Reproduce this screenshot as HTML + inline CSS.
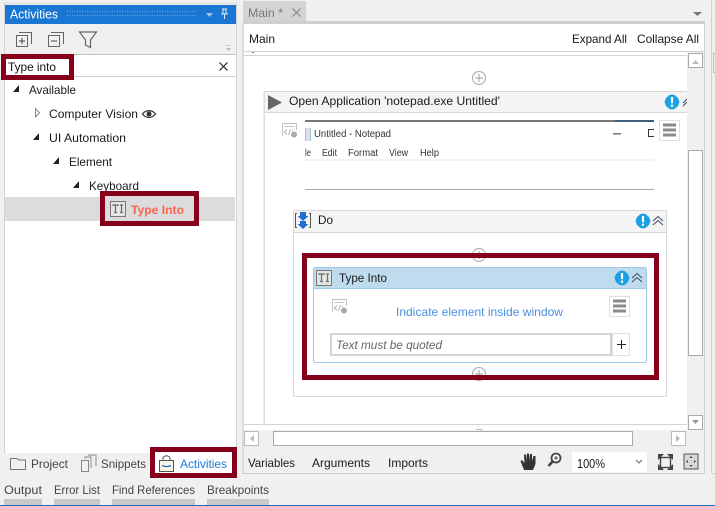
<!DOCTYPE html>
<html><head><meta charset="utf-8"><style>
html,body{margin:0;padding:0;background:#f0f0f0;width:715px;height:506px;overflow:hidden}
svg{display:block}
text{font-family:"Liberation Sans",sans-serif;font-size:12px;fill:#1a1a1a}
</style></head><body>
<svg width="715" height="506" viewBox="0 0 715 506" xmlns="http://www.w3.org/2000/svg">
<defs>
<g id="info"><path d="M0-7.500 L2.500-7 L6-4 L7.500 0 L6 4 L2.500 7 L0 7.500 L-2.500 7 L-6 4 L-7.500 0 L-6-4 L-2.500-7Z" fill="#1ba1e2"/><rect x="-1.100" y="-5" width="2.200" height="6.200" fill="#fff"/><rect x="-1.100" y="2.600" width="2.200" height="2.200" fill="#fff"/></g>
<path id="chev" d="M-5 0 L0-4.500 L5 0 M-5 4 L0-.5 L5 4" fill="none" stroke="#3c4a63" stroke-width="1"/>
<g id="plusc"><circle r="6.500" fill="#fff" stroke="#b4b4b4" stroke-width="1.200"/><path d="M-4 0H4M0-4V4" stroke="#a0a0a0" stroke-width="1"/></g>
<g id="menu"><rect x=".5" y=".5" width="20" height="20" fill="#fff" stroke="#dcdfe6"/><rect x="4" y="3.500" width="13" height="3" fill="#8a8a8a"/><rect x="4" y="8.500" width="13" height="3" fill="#8a8a8a"/><rect x="4" y="13.500" width="13" height="3" fill="#8a8a8a"/></g>
<g id="ti"><rect x=".5" y=".5" width="15" height="15" fill="#e4e4e4" stroke="#777"/><path d="M3 5V4H8V5M5.500 4V11.500M4 11.500H7M10 4H13M11.500 4V11.500M10 11.500H13" fill="none" stroke="#6c6c6c" stroke-width="1.200"/></g>
<g id="code"><path d="M.5 12.500V.5H14.500V7" fill="#fff" stroke="#c2c2c2"/><path d="M2.500 3.500H12.500" stroke="#c8c8c8"/><path d="M5 6.500 L2.500 9 L5 11.500M6.500 12 L8.500 6M10 7 L11 8" fill="none" stroke="#b0b0b0"/><circle cx="12" cy="11.500" r="3" fill="#aaa"/></g>
</defs>

<rect width="715" height="506" fill="#f0f0f0"/>

<!-- left panel -->
<path d="M4.500 2.500V453M236.500 2.500V453" fill="none" stroke="#d2d2d2"/>
<rect x="5" y="5" width="231" height="19" fill="#1976d2"/>
<rect x="5" y="2" width="231" height="3" fill="#e6e6e6"/>
<text x="10" y="18.500" textLength="48" lengthAdjust="spacingAndGlyphs" style="fill:#fff;font-size:13px">Activities</text>
<path d="M67 11.500H196M67 15.500H196" stroke="#6ea8e4" stroke-width="1" stroke-dasharray="1 1.500"/>
<path d="M206 13H213L209.500 17Z" fill="#9dc3ee"/>
<path d="M222 9H227M223 9V14M226 9V14M221 14H228M224.500 14V19" fill="none" stroke="#e4effb" stroke-width="1"/>

<rect x="16.500" y="35.500" width="11" height="11" fill="none" stroke="#666"/>
<path d="M19 32.500H31.500V44" fill="none" stroke="#666"/>
<path d="M19 41H25M22 38V44" stroke="#444"/>
<rect x="48.500" y="35.500" width="11" height="11" fill="none" stroke="#666"/>
<path d="M51 32.500H63.500V44" fill="none" stroke="#666"/>
<path d="M51 41H57" stroke="#444"/>
<path d="M79.500 32H96.500L90.500 40V47.500L85.500 45V40Z" fill="none" stroke="#666" stroke-width="1.200"/>
<path d="M226 45.500H231" stroke="#ccc"/><path d="M226 48H231L228.500 51Z" fill="#bbb"/>

<rect x="5" y="54" width="231" height="1" fill="#c4c4c4"/>
<rect x="5" y="55" width="231" height="398" fill="#fff"/>
<rect x="5" y="76" width="231" height="1" fill="#d0d0d0"/>
<rect x="3.500" y="56.500" width="68" height="21" fill="#fff" stroke="#87001b" stroke-width="5"/>
<text x="8" y="71" textLength="48" lengthAdjust="spacingAndGlyphs" style="fill:#111">Type into</text>
<path d="M219.500 62.500L227.500 70.500M227.500 62.500L219.500 70.500" stroke="#222" stroke-width="1.200"/>

<path d="M19 85V92H13Z" fill="#222"/>
<text x="29" y="94" textLength="47" lengthAdjust="spacingAndGlyphs">Available</text>
<path d="M35.500 108.500V117L39.500 112.750Z" fill="#fff" stroke="#888"/>
<text x="49" y="118" textLength="89" lengthAdjust="spacingAndGlyphs">Computer Vision</text>
<path d="M142.500 114C146 109.500 152 109.500 155.500 114C152 118.500 146 118.500 142.500 114Z" fill="none" stroke="#333" stroke-width="1.200"/><circle cx="149" cy="114" r="2.500" fill="#333"/>
<path d="M39 133V140H33Z" fill="#222"/>
<text x="49" y="142" textLength="77" lengthAdjust="spacingAndGlyphs">UI Automation</text>
<path d="M59 157V164H53Z" fill="#222"/>
<text x="69" y="166" textLength="43" lengthAdjust="spacingAndGlyphs">Element</text>
<path d="M79 181V188H73Z" fill="#222"/>
<text x="89" y="190" textLength="50" lengthAdjust="spacingAndGlyphs">Keyboard</text>

<rect x="5" y="197" width="230" height="24" fill="#dcdcdc"/>
<rect x="102.500" y="193.500" width="94" height="30" fill="#dcdcdc" stroke="#87001b" stroke-width="5"/>
<use href="#ti" x="110" y="201"/>
<text x="131" y="214" textLength="53" lengthAdjust="spacingAndGlyphs" style="font-weight:bold;fill:#f4674f">Type Into</text>

<!-- bottom tabs -->
<path d="M10.500 458.500H17L18.500 460H25.500V469.500H10.500Z" fill="none" stroke="#777"/>
<text x="31" y="468" textLength="37" lengthAdjust="spacingAndGlyphs" style="fill:#444">Project</text>
<path d="M81.500 460.500H88.500V471.500H81.500ZM85 459V457H91V468M89 456V455H96V466" fill="#f0f0f0" stroke="#888"/>
<text x="101" y="468" textLength="45" lengthAdjust="spacingAndGlyphs" style="fill:#444">Snippets</text>
<rect x="152.500" y="449.500" width="82" height="26" fill="#fff" stroke="#87001b" stroke-width="5"/>
<path d="M159.500 460.500H173.500V471.500H159.500Z" fill="#f8f4ea" stroke="#555"/>
<path d="M163 460V457.500Q166.500 454 170 457.500V460" fill="none" stroke="#555"/>
<path d="M162 465.500L165 466.500H168L171 465.500" fill="none" stroke="#2a6ab0" stroke-width="1.200"/>
<text x="180" y="468" textLength="47" lengthAdjust="spacingAndGlyphs" style="fill:#1f77e0">Activities</text>

<text x="4" y="494" textLength="38" lengthAdjust="spacingAndGlyphs" style="fill:#444">Output</text>
<text x="54" y="494" textLength="46" lengthAdjust="spacingAndGlyphs" style="fill:#444">Error List</text>
<text x="112" y="494" textLength="83" lengthAdjust="spacingAndGlyphs" style="fill:#444">Find References</text>
<text x="207" y="494" textLength="62" lengthAdjust="spacingAndGlyphs" style="fill:#444">Breakpoints</text>
<rect x="4" y="499" width="38" height="6" fill="#c9c9c9"/>
<rect x="54" y="499" width="46" height="6" fill="#c9c9c9"/>
<rect x="112" y="499" width="83" height="6" fill="#c9c9c9"/>
<rect x="207" y="499" width="62" height="6" fill="#c9c9c9"/>
<rect x="0" y="505" width="715" height="1" fill="#1b6ec2"/>

<!-- right edge -->
<rect x="711" y="0" width="1" height="473" fill="#d0d0d0"/>
<rect x="713.500" y="53.500" width="3" height="19" fill="none" stroke="#888" stroke-dasharray="1 1"/>
<rect x="712" y="473" width="3" height="1" fill="#d0d0d0"/>

<!-- main tab -->
<rect x="243" y="1" width="63" height="21" fill="#d3d3d3"/>
<text x="248" y="17" textLength="35" lengthAdjust="spacingAndGlyphs" style="fill:#777">Main *</text>
<path d="M292.500 8.500L300.500 16.500M300.500 8.500L292.500 16.500" stroke="#8a8a8a" stroke-width="1.200"/>
<path d="M693 12H702L697.500 16Z" fill="#777"/>
<rect x="243" y="21" width="462" height="3" fill="#cfcfcf"/>
<rect x="242" y="24" width="2" height="450" fill="#dcdcdc"/>
<rect x="704" y="21" width="1" height="453" fill="#cfcfcf"/>
<rect x="244" y="24" width="460" height="427" fill="#fff"/>
<text x="249" y="43" textLength="26" lengthAdjust="spacingAndGlyphs">Main</text>
<text x="572" y="43" textLength="55" lengthAdjust="spacingAndGlyphs">Expand All</text>
<text x="637" y="43" textLength="62" lengthAdjust="spacingAndGlyphs">Collapse All</text>
<rect x="244" y="51" width="460" height="1" fill="#d0d0d0"/>
<rect x="244" y="55" width="443" height="1" fill="#d4d4d4"/>
<rect x="252" y="52" width="2" height="1" fill="#4a90e2"/>

<!-- designer -->
<use href="#plusc" x="479" y="78"/>
<rect x="264" y="92" width="423" height="20" fill="#f4f4f4"/>
<path d="M264 91.500H687M264 112.500H687" stroke="#d8d8d8"/>
<path d="M264 424.500V91M264.500 424V91" stroke="#dedede"/>
<path d="M268 95L282 102.500L268 110Z" fill="#666"/>
<text x="289" y="105" textLength="211" lengthAdjust="spacingAndGlyphs">Open Application 'notepad.exe Untitled'</text>
<use href="#info" x="672" y="102"/>
<path d="M683 106L687 102M683 103L687 99" stroke="#3c4a63"/>
<use href="#code" x="282" y="123"/>

<!-- scrollbars -->
<rect x="687" y="52" width="17" height="379" fill="#f0f0f0"/>
<rect x="688.500" y="53.500" width="14" height="14" fill="#fff" stroke="#aaa"/>
<path d="M692 64H699L695.500 60Z" fill="#bbb"/>
<rect x="688.500" y="150.500" width="14" height="205" fill="#fff" stroke="#aaa"/>
<rect x="688.500" y="415.500" width="14" height="14" fill="#fff" stroke="#aaa"/>
<path d="M692 420H699L695.500 424Z" fill="#999"/>
<rect x="244" y="424" width="443" height="1" fill="#d4d4d4"/>
<rect x="244" y="430" width="460" height="21" fill="#f0f0f0"/>
<rect x="244.500" y="431.500" width="14" height="14" fill="#fff" stroke="#bbb"/>
<path d="M254 435V442L250 438.500Z" fill="#bbb"/>
<rect x="273.500" y="431.500" width="359" height="14" fill="#fff" stroke="#aaa"/>
<rect x="671.500" y="431.500" width="14" height="14" fill="#fff" stroke="#bbb"/>
<path d="M676 435V442L680 438.500Z" fill="#bbb"/>
<rect x="476" y="429" width="7" height="1" fill="#bbb"/>

<!-- bottom bar of designer -->
<rect x="242" y="473" width="463" height="1" fill="#cfcfcf"/>
<text x="248" y="467" textLength="47" lengthAdjust="spacingAndGlyphs">Variables</text>
<text x="312" y="467" textLength="58" lengthAdjust="spacingAndGlyphs">Arguments</text>
<text x="388" y="467" textLength="40" lengthAdjust="spacingAndGlyphs">Imports</text>
<path d="M524 470L520.500 461L522 460L524.500 463L524 454.500H526V461L527 453.500H529V461L530 454H532V461L533.500 456H535.500V464L533 470Z" fill="#333"/>
<circle cx="556" cy="458" r="4.500" fill="#fff" stroke="#444" stroke-width="1.800"/><path d="M553 461L548.500 466" stroke="#444" stroke-width="2.600"/><path d="M554 458H558M556 456V460" stroke="#444"/>
<rect x="572" y="452" width="75" height="20" fill="#fff"/>
<text x="577" y="468" textLength="28" lengthAdjust="spacingAndGlyphs" style="font-size:13px">100%</text>
<path d="M636 460L639 463L642 460" fill="none" stroke="#666"/>
<rect x="660.500" y="457.500" width="10" height="10" fill="none" stroke="#444" stroke-width="1.400"/>
<path d="M658 454H664L658 460ZM673 454H667L673 460ZM658 470H664L658 464ZM673 470H667L673 464Z" fill="#444"/>
<rect x="684" y="454" width="14" height="15" fill="#d8d8d8" stroke="#555"/>
<path d="M691 456L689.500 458H692.500ZM691 467L689.500 465H692.500ZM686 461.500L688 460V463ZM696 461.500L694 460V463Z" fill="#444"/>

<!-- notepad screenshot -->
<rect x="305" y="120" width="349" height="2" fill="#777"/>
<rect x="615" y="120" width="39" height="2" fill="#3d5f80"/>
<rect x="305" y="128" width="6" height="13" fill="#9cc"/><rect x="306" y="128" width="4" height="13" fill="#dde"/>
<text x="314" y="137" textLength="77" lengthAdjust="spacingAndGlyphs" style="font-size:10px;fill:#333">Untitled - Notepad</text>
<rect x="613" y="133" width="8" height="1.500" fill="#777"/>
<path d="M654 129.500H648.500V136.500H654" fill="none" stroke="#333"/>
<text x="305" y="156" textLength="6" lengthAdjust="spacingAndGlyphs" style="font-size:10px;fill:#333">le</text>
<text x="322" y="156" textLength="15" lengthAdjust="spacingAndGlyphs" style="font-size:10px;fill:#333">Edit</text>
<text x="348" y="156" textLength="30" lengthAdjust="spacingAndGlyphs" style="font-size:10px;fill:#333">Format</text>
<text x="389" y="156" textLength="19" lengthAdjust="spacingAndGlyphs" style="font-size:10px;fill:#333">View</text>
<text x="420" y="156" textLength="19" lengthAdjust="spacingAndGlyphs" style="font-size:10px;fill:#333">Help</text>
<rect x="305" y="159" width="349" height="2" fill="#f2f2f2"/>
<rect x="305" y="189" width="349" height="1" fill="#aaa"/>
<use href="#menu" x="659" y="120"/>

<!-- do -->
<rect x="293.500" y="210.500" width="373" height="186" fill="#fff" stroke="#d8d8d8"/>
<rect x="294" y="211" width="372" height="21" fill="#f4f4f4"/>
<path d="M293 232.500H667" stroke="#d4d4d4"/>
<path d="M297 213.500H295.500V227.500H297M309 213.500H310.500V227.500H309" fill="none" stroke="#555"/>
<path d="M300 212H306V216H308.500L303 221L297.500 216H300ZM300 221H306V224H308.500L303 229L297.500 224H300Z" fill="#1f6fd0"/>
<text x="318" y="224" textLength="15" lengthAdjust="spacingAndGlyphs">Do</text>
<use href="#info" x="643" y="221"/>
<use href="#chev" x="658" y="221"/>

<use href="#plusc" x="479" y="255"/>
<use href="#plusc" x="479" y="374"/>
<rect x="304.500" y="255.500" width="352" height="122" fill="none" stroke="#87001b" stroke-width="5"/>
<rect x="313.500" y="267.500" width="333" height="95" rx="2" fill="#fff" stroke="#9cc7e6"/>
<rect x="314" y="268" width="332" height="20" fill="#bfdcef"/>
<path d="M314 288.500H646" stroke="#9cc7e6"/>
<use href="#ti" x="316" y="270"/>
<text x="339" y="282" textLength="48" lengthAdjust="spacingAndGlyphs">Type Into</text>
<use href="#info" x="622" y="278"/>
<use href="#chev" x="637" y="278"/>
<use href="#code" x="332" y="299"/>
<text x="396" y="316" textLength="167" lengthAdjust="spacingAndGlyphs" style="fill:#4a8fe0">Indicate element inside window</text>
<use href="#menu" x="609" y="296"/>
<rect x="331" y="334" width="280" height="21" fill="#fff" stroke="#d4d4d4" stroke-width="2"/>
<text x="336" y="349" textLength="106" lengthAdjust="spacingAndGlyphs" style="font-style:italic;fill:#666">Text must be quoted</text>
<rect x="612.500" y="333.500" width="17" height="22" fill="#fff" stroke="#dcdfe6"/>
<path d="M617 344.500H626M621.500 340V349" stroke="#222" stroke-width="1.100"/>
</svg>
</body></html>
